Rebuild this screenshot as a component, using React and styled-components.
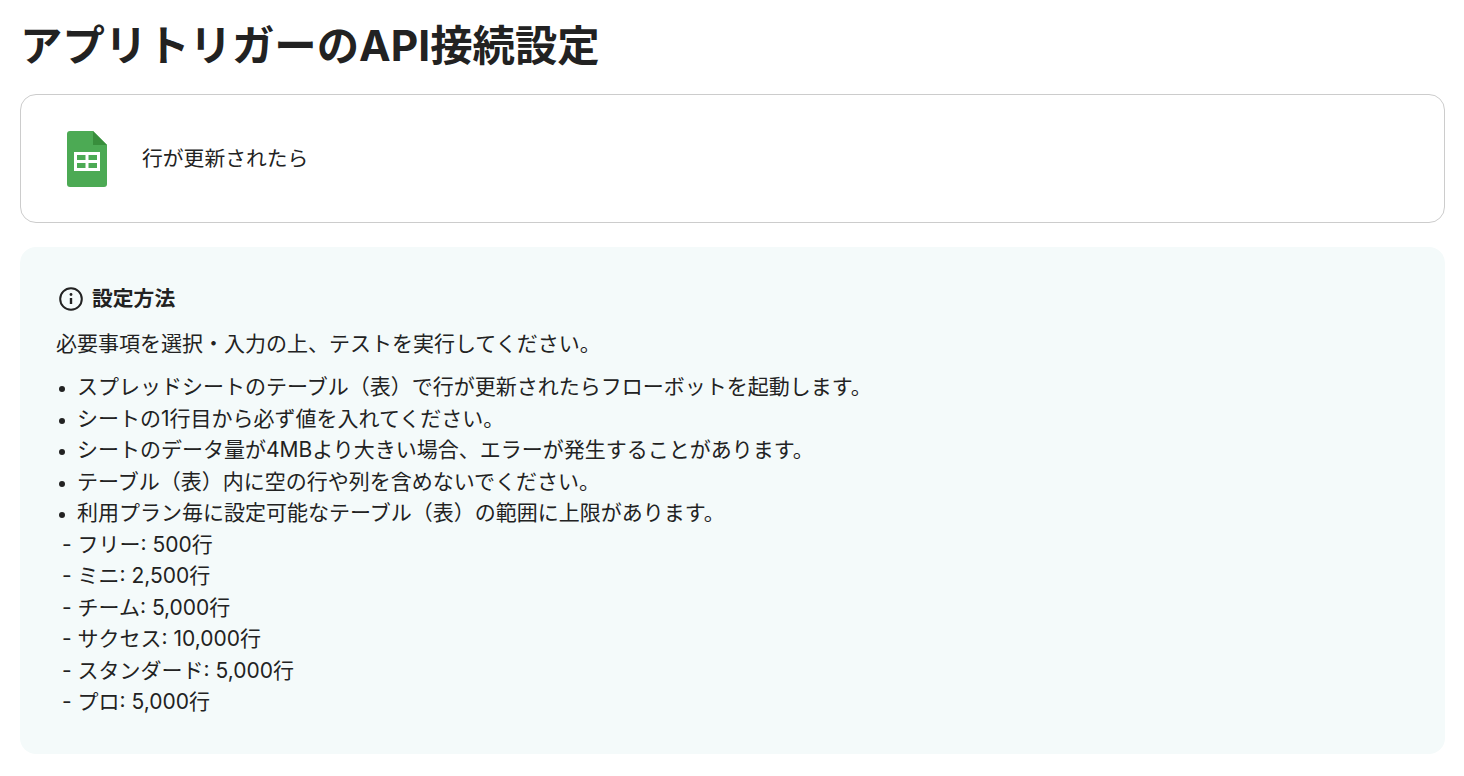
import React from 'react'
import styled, { createGlobalStyle } from 'styled-components'

const GlobalStyle = createGlobalStyle`
    html, body { margin: 0; padding: 0; background: #fff; }
    body {
        font-family: "Inter", "Noto Sans CJK JP", sans-serif;
        color: #222;
    }
`

const Page = styled.div`
    padding: 17px 19px 0 20px;
`

const Title = styled.h1`
    margin: 0 0 19px;
    font-size: 42.4px;
    line-height: 58px;
    font-weight: 700;
`

const TriggerCard = styled.div`
    display: flex;
    align-items: center;
    gap: 35px;
    height: 129px;
    box-sizing: border-box;
    padding-left: 46px;
    border: 1px solid #ccc;
    border-radius: 16px;
    margin-bottom: 24px;
`

const TriggerLabel = styled.span`
    font-size: 20.8px;
    line-height: 28px;
`

const InfoPanel = styled.section`
    background: #f4fafa;
    border-radius: 16px;
    padding: 38px 36px 36px;
`

const InfoHead = styled.div`
    display: flex;
    align-items: center;
    gap: 9px;
    margin: 0 0 15px 3px;
    font-size: 20.8px;
    font-weight: 700;
    line-height: 28px;
`

const Lead = styled.p`
    margin: 0 0 11px;
    font-size: 21px;
    line-height: 32px;
`

const List = styled.ul`
    margin: 0;
    padding: 0 0 0 21px;
    font-size: 21px;
    line-height: 31.5px;

    li::marker {
        font-size: 18px;
    }
`

const Plain = styled.div`
    font-size: 21px;
    line-height: 31.5px;
    padding-left: 6px;
`

const SheetIcon = () => (
    <svg width="40" height="56" viewBox="0 0 40 56">
        <path d="M3 0h23l14 14v39a3 3 0 0 1-3 3H3a3 3 0 0 1-3-3V3a3 3 0 0 1 3-3z" fill="#4caa54" />
        <path d="M26 0l14 14H26z" fill="#388e3c" />
        <path d="M7 21h26v19H7z M10 24v5h8.500v-5z M21.500 24v5h8.500v-5z M10 32v5h8.500v-5z M21.500 32v5h8.500v-5z" fill="#fff" fillRule="evenodd" />
    </svg>
)

const InfoIcon = () => (
    <svg width="24" height="24" viewBox="0 0 24 24" fill="none" stroke="#222" strokeWidth="2">
        <circle cx="12" cy="12" r="10.800" />
        <path d="M12 11v6" strokeWidth="2.400" />
        <circle cx="12" cy="7.500" r="1.400" fill="#222" stroke="none" />
    </svg>
)

const items = [
    'スプレッドシートのテーブル（表）で行が更新されたらフローボットを起動します。',
    'シートの1行目から必ず値を入れてください。',
    'シートのデータ量が4MBより大きい場合、エラーが発生することがあります。',
    'テーブル（表）内に空の行や列を含めないでください。',
    '利用プラン毎に設定可能なテーブル（表）の範囲に上限があります。',
]

const plans = ['フリー: 500行', 'ミニ: 2,500行', 'チーム: 5,000行', 'サクセス: 10,000行', 'スタンダード: 5,000行', 'プロ: 5,000行']

const App = () => (
    <Page>
        <GlobalStyle />
        <Title>アプリトリガーのAPI接続設定</Title>
        <TriggerCard>
            <SheetIcon />
            <TriggerLabel>行が更新されたら</TriggerLabel>
        </TriggerCard>
        <InfoPanel>
            <InfoHead><InfoIcon />設定方法</InfoHead>
            <Lead>必要事項を選択・入力の上、テストを実行してください。</Lead>
            <List>
                {items.map(t => <li key={t}>{t}</li>)}
            </List>
            {plans.map(p => <Plain key={p}>- {p}</Plain>)}
        </InfoPanel>
    </Page>
)

export default App
